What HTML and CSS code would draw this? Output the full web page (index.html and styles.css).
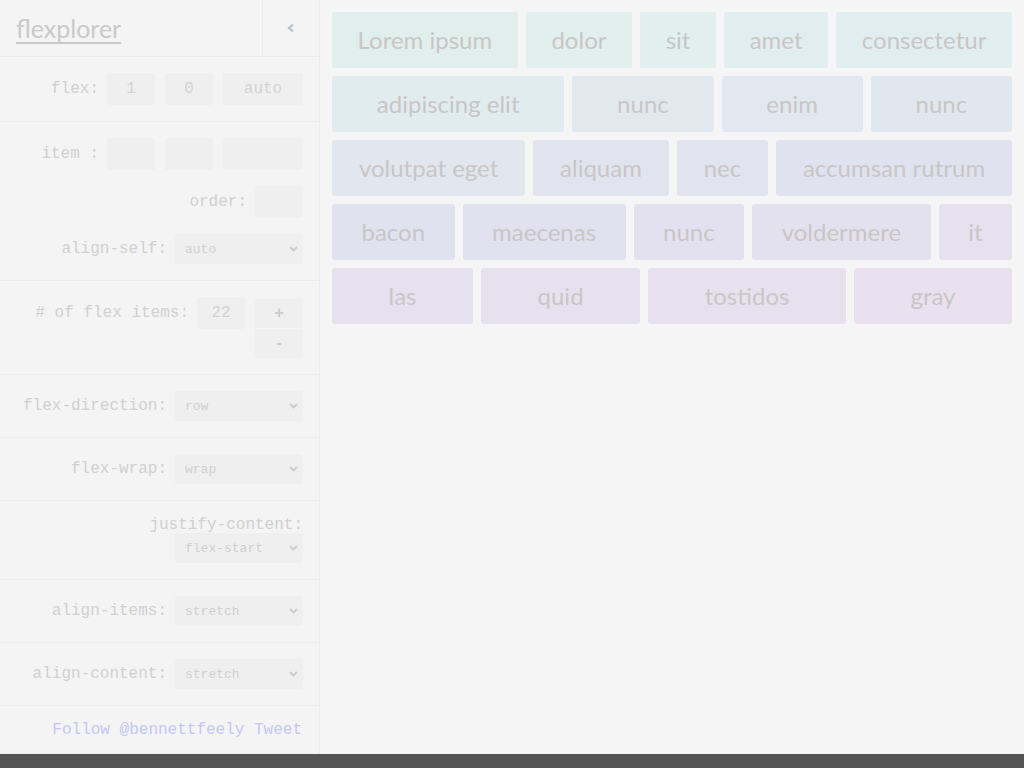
FILE: index.html
```html
<!DOCTYPE html>
<html>
<head>
<meta charset="utf-8">
<title>flexplorer</title>
<link rel="stylesheet" href="styles.css">
</head>
<body>
<div class="app">
  <aside class="sidebar">
    <header class="head">
      <a class="title" href="#">flexplorer</a>
      <button class="collapse" type="button">
        <svg width="10" height="10" viewBox="0 0 10 10"><path d="M7 1.5 L3 5 L7 8.5" fill="none" stroke="#b9c0cb" stroke-width="2.2"/></svg>
      </button>
    </header>

    <section class="group">
      <div class="row">
        <label class="lbl">flex:</label>
        <input class="field sm" value="1">
        <input class="field sm" value="0">
        <input class="field md" value="auto">
      </div>
    </section>

    <section class="group stack">
      <div class="row">
        <label class="lbl">item :</label>
        <input class="field sm" value="">
        <input class="field sm" value="">
        <input class="field md" value="">
      </div>
      <div class="row">
        <label class="lbl">order:</label>
        <input class="field sm" value="">
      </div>
      <div class="row">
        <label class="lbl">align-self:</label>
        <span class="sel"><select><option>auto</option></select><svg class="chev" width="9" height="6" viewBox="0 0 9 6"><path d="M1 1 L4.5 4.5 L8 1" fill="none" stroke="#cbcbcb" stroke-width="1.8"/></svg></span>
      </div>
    </section>

    <section class="group">
      <div class="row top">
        <label class="lbl tall"># of flex items:</label>
        <input class="field sm" value="22">
        <div class="steps">
          <button class="step" type="button">+</button>
          <button class="step" type="button">-</button>
        </div>
      </div>
    </section>

    <section class="group">
      <div class="row">
        <label class="lbl">flex-direction:</label>
        <span class="sel"><select><option>row</option></select><svg class="chev" width="9" height="6" viewBox="0 0 9 6"><path d="M1 1 L4.5 4.5 L8 1" fill="none" stroke="#cbcbcb" stroke-width="1.8"/></svg></span>
      </div>
    </section>

    <section class="group">
      <div class="row">
        <label class="lbl">flex-wrap:</label>
        <span class="sel"><select><option>wrap</option></select><svg class="chev" width="9" height="6" viewBox="0 0 9 6"><path d="M1 1 L4.5 4.5 L8 1" fill="none" stroke="#cbcbcb" stroke-width="1.8"/></svg></span>
      </div>
    </section>

    <section class="group">
      <div class="row wrap">
        <label class="lbl short">justify-content:</label>
        <span class="sel"><select><option>flex-start</option></select><svg class="chev" width="9" height="6" viewBox="0 0 9 6"><path d="M1 1 L4.5 4.5 L8 1" fill="none" stroke="#cbcbcb" stroke-width="1.8"/></svg></span>
      </div>
    </section>

    <section class="group">
      <div class="row">
        <label class="lbl">align-items:</label>
        <span class="sel"><select><option>stretch</option></select><svg class="chev" width="9" height="6" viewBox="0 0 9 6"><path d="M1 1 L4.5 4.5 L8 1" fill="none" stroke="#cbcbcb" stroke-width="1.8"/></svg></span>
      </div>
    </section>

    <section class="group">
      <div class="row">
        <label class="lbl">align-content:</label>
        <span class="sel"><select><option>stretch</option></select><svg class="chev" width="9" height="6" viewBox="0 0 9 6"><path d="M1 1 L4.5 4.5 L8 1" fill="none" stroke="#cbcbcb" stroke-width="1.8"/></svg></span>
      </div>
    </section>

    <footer class="foot">
      <a href="#">Follow @bennettfeely</a> <a href="#">Tweet</a>
    </footer>
  </aside>

  <main class="stage">
    <div class="item" style="background:hsl(168,30%,91%)">Lorem ipsum</div>
    <div class="item" style="background:hsl(173,30%,91%)">dolor</div>
    <div class="item" style="background:hsl(178,30%,91%)">sit</div>
    <div class="item" style="background:hsl(182,30%,91%)">amet</div>
    <div class="item" style="background:hsl(186,30%,91%)">consectetur</div>
    <div class="item" style="background:hsl(194,30%,91%)">adipiscing elit</div>
    <div class="item" style="background:hsl(204,30%,91%)">nunc</div>
    <div class="item" style="background:hsl(209,30%,91%)">enim</div>
    <div class="item" style="background:hsl(214,30%,91%)">nunc</div>
    <div class="item" style="background:hsl(220,30%,91%)">volutpat eget</div>
    <div class="item" style="background:hsl(226,30%,91%)">aliquam</div>
    <div class="item" style="background:hsl(232,30%,91%)">nec</div>
    <div class="item" style="background:hsl(238,30%,91%)">accumsan rutrum</div>
    <div class="item" style="background:hsl(236,30%,91%)">bacon</div>
    <div class="item" style="background:hsl(240,30%,91%)">maecenas</div>
    <div class="item" style="background:hsl(246,30%,91%)">nunc</div>
    <div class="item" style="background:hsl(254,30%,91%)">voldermere</div>
    <div class="item" style="background:hsl(256,30%,91%)">it</div>
    <div class="item" style="background:hsl(258,30%,91%)">las</div>
    <div class="item" style="background:hsl(262,30%,91%)">quid</div>
    <div class="item" style="background:hsl(267,30%,91%)">tostidos</div>
    <div class="item" style="background:hsl(272,30%,91%)">gray</div>
  </main>
</div>
<div class="bar"></div>
</body>
</html>
```

FILE: styles.css
```css
* { box-sizing: border-box; }
html, body { margin: 0; padding: 0; }
body {
  background: #f5f5f5;
  font-family: "Liberation Mono", monospace;
  color: #d0d0d0;
  height: 768px;
  overflow: hidden;
  display: flex;
  flex-direction: column;
}
.app {
  display: flex;
  height: 754px;
}
.bar {
  height: 14px;
  background: #545454;
}
.sidebar {
  width: 320px;
  flex: none;
  background: #f4f4f4;
  border-right: 1px solid #ebebeb;
  display: flex;
  flex-direction: column;
}
.head {
  height: 57px;
  border-bottom: 1px solid #ebebeb;
  display: flex;
  align-items: stretch;
}
.title {
  flex: 1;
  padding-left: 16px;
  font-family: Lato, "Open Sans", sans-serif;
  font-size: 25px;
  line-height: 56px;
  color: #c9c9c9;
  text-decoration: underline;
  text-decoration-thickness: 2px;
  text-underline-offset: 4px;
}
.collapse {
  width: 57px;
  border: none;
  border-left: 1px solid #ebebeb;
  background: transparent;
  padding: 0;
  display: flex;
  align-items: center;
  justify-content: center;
}
.collapse svg { margin-top: -1px; margin-left: 0; }
.group {
  padding: 16px;
  border-bottom: 1px solid #ebebeb;
}
.stack {
  display: flex;
  flex-direction: column;
  gap: 16px;
}
.row {
  display: flex;
  justify-content: flex-end;
  align-items: center;
  gap: 10px;
}
.row.top { align-items: flex-start; }
.row.wrap { flex-wrap: wrap; gap: 0; }
.lbl {
  font-size: 16px;
  color: #d0d0d0;
  margin-right: -2px;
  white-space: nowrap;
}
.lbl.tall { line-height: 32px; }
.lbl.short {
  width: 100%;
  text-align: right;
  line-height: 16px;
  margin-right: 0;
}
.field {
  height: 32px;
  border: none;
  border-radius: 3px;
  background: #efefef;
  font-family: "Liberation Mono", monospace;
  font-size: 16px;
  color: #d3d3d3;
  text-align: center;
  padding: 0;
  outline: none;
}
.field.sm { width: 48px; }
.field.md { width: 80px; }
.steps {
  display: flex;
  flex-direction: column;
  gap: 1px;
  padding-top: 2px;
}
.step {
  width: 48px;
  height: 29px;
  border: none;
  border-radius: 3px;
  background: #efefef;
  font-family: "Liberation Mono", monospace;
  font-size: 16px;
  font-weight: bold;
  color: #cbcbcb;
  padding: 0;
}
.sel {
  position: relative;
  width: 128px;
  height: 30px;
  display: block;
}
.sel select {
  appearance: none;
  -webkit-appearance: none;
  width: 100%;
  height: 100%;
  border: none;
  border-radius: 3px;
  background: #efefef;
  font-family: "Liberation Mono", monospace;
  font-size: 13px;
  color: #d0d0d0;
  padding: 0 0 0 10px;
  outline: none;
}
.chev {
  position: absolute;
  right: 5px;
  top: 12px;
  pointer-events: none;
}
.foot {
  height: 48px;
  padding: 0 17px 0 16px;
  display: flex;
  justify-content: flex-end;
  align-items: center;
  gap: 9.6px;
  font-size: 16px;
}
.foot a {
  color: #c6c6f4;
  text-decoration: none;
}
.stage {
  flex: 1;
  padding: 12px;
  display: flex;
  flex-wrap: wrap;
  align-content: flex-start;
  gap: 8px;
}
.item {
  flex: 1 0 auto;
  height: 56px;
  padding: 0 24px;
  border-radius: 3px;
  display: flex;
  align-items: center;
  justify-content: center;
  font-family: Lato, "Open Sans", sans-serif;
  font-size: 24px;
  line-height: 1;
  color: #c9c6c6;
  white-space: nowrap;
}
```
